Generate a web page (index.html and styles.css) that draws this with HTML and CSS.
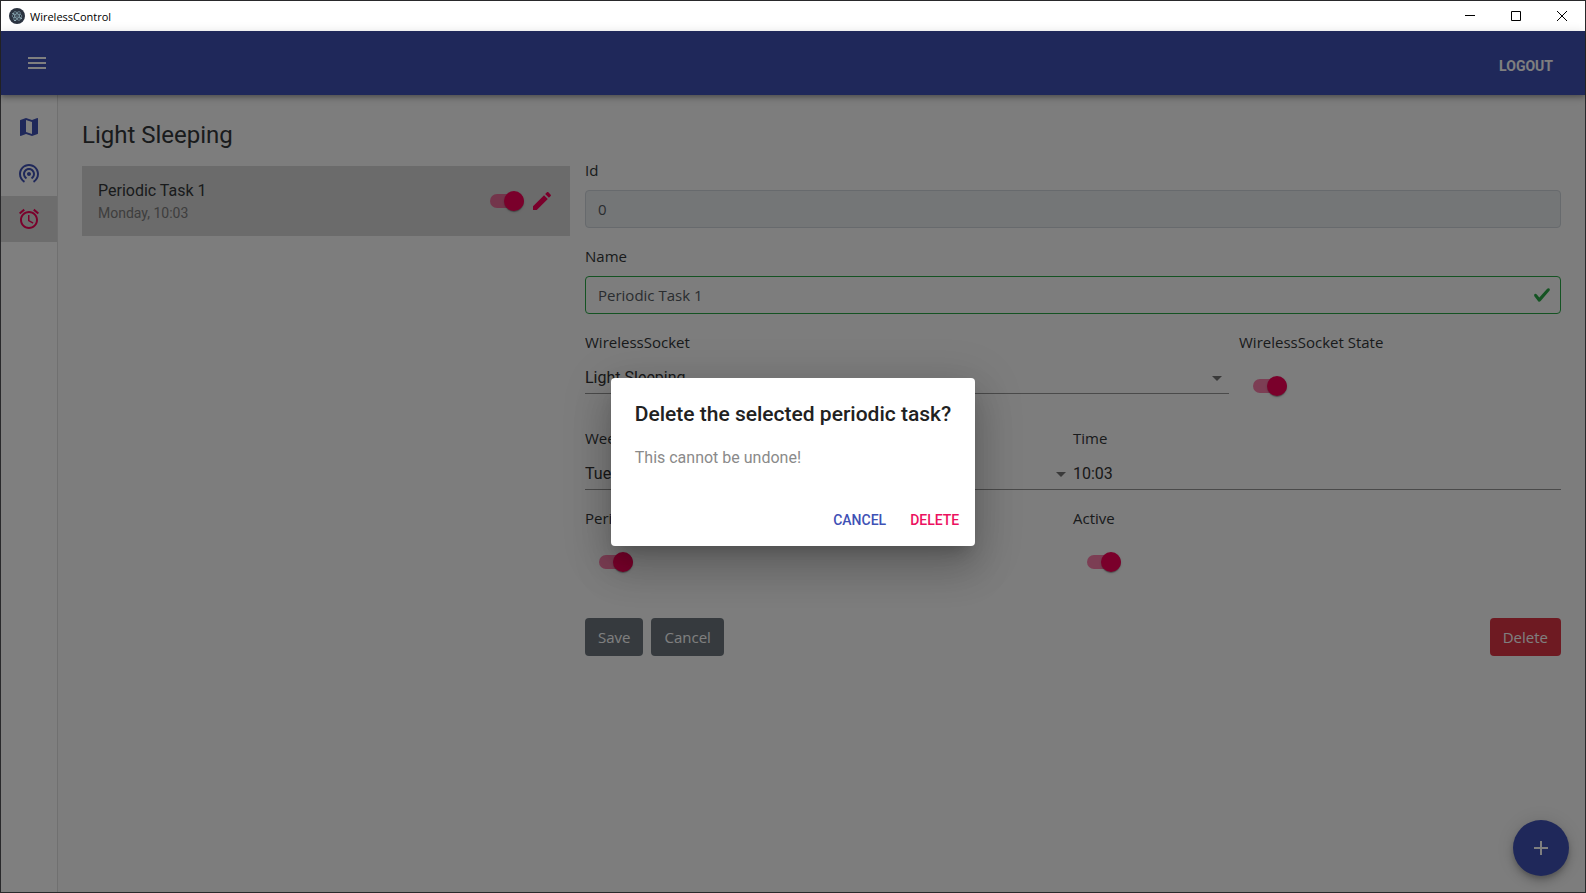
FILE: index.html
```html
<!DOCTYPE html>
<html lang="en">
<head>
<meta charset="utf-8">
<title>WirelessControl</title>
<link rel="stylesheet" href="styles.css">
</head>
<body>
<div class="window">
  <header class="titlebar">
    <svg class="titlebar-logo" viewBox="0 0 16 16" aria-hidden="true">
      <circle cx="8" cy="8" r="8" fill="#2b3340"/>
      <g fill="none" stroke="#9fc3cf" stroke-width=".5">
        <ellipse cx="8" cy="8" rx="5" ry="2"/>
        <ellipse cx="8" cy="8" rx="5" ry="2" transform="rotate(60 8 8)"/>
        <ellipse cx="8" cy="8" rx="5" ry="2" transform="rotate(120 8 8)"/>
      </g>
      <g fill="#b9dbe5"><circle cx="8" cy="8" r=".6"/><circle cx="4" cy="5.6" r=".7"/><circle cx="12.2" cy="10.2" r=".7"/><circle cx="6" cy="12.4" r=".7"/></g>
    </svg>
    <span class="titlebar-name">WirelessControl</span>
    <div class="titlebar-controls">
      <button type="button" aria-label="Minimize"><svg viewBox="0 0 10 10"><path d="M0 4.5h10"/></svg></button>
      <button type="button" aria-label="Maximize"><svg viewBox="0 0 10 10"><path d="M.5.5h9v9h-9z"/></svg></button>
      <button type="button" aria-label="Close"><svg viewBox="0 0 10 10"><path d="M0 0l10 10M10 0L0 10"/></svg></button>
    </div>
  </header>

  <div class="app">
    <div class="appbar">
      <button class="icon-button" type="button" aria-label="Menu">
        <svg class="icon" viewBox="0 0 24 24"><path d="M3 18h18v-2H3v2zm0-5h18v-2H3v2zm0-7v2h18V6H3z"/></svg>
      </button>
      <button class="logout" type="button">LOGOUT</button>
    </div>

    <div class="body">
      <nav class="sidebar">
        <a class="nav-item" href="#map" aria-label="Map"><svg class="icon" viewBox="0 0 24 24"><path d="M20.5 3l-.16.03L15 5.1 9 3 3.36 4.9c-.21.07-.36.25-.36.48V20.500c0 .28.22.5.5.5l.16-.03L9 18.900l6 2.100 5.640-1.900c.21-.07.36-.25.36-.48V3.500c0-.28-.22-.5-.5-.5zM15 19l-6-2.110V5l6 2.110V19z"/></svg></a>
        <a class="nav-item" href="#sockets" aria-label="Sockets"><svg class="icon" viewBox="0 0 24 24"><path d="M12 11c-1.100 0-2 .9-2 2s.9 2 2 2 2-.9 2-2-.9-2-2-2zm6 2c0-3.310-2.690-6-6-6s-6 2.690-6 6c0 2.220 1.210 4.150 3 5.190l1-1.740c-1.190-.7-2-1.970-2-3.450 0-2.210 1.790-4 4-4s4 1.790 4 4c0 1.480-.81 2.750-2 3.450l1 1.740c1.790-1.040 3-2.970 3-5.190zM12 3C6.480 3 2 7.480 2 13c0 3.700 2.010 6.920 4.990 8.650l1-1.730C5.610 18.530 4 15.960 4 13c0-4.420 3.580-8 8-8s8 3.580 8 8c0 2.960-1.610 5.530-4 6.920l1 1.730c2.990-1.730 5-4.950 5-8.650 0-5.520-4.480-10-10-10z"/></svg></a>
        <a class="nav-item nav-item-active" href="#tasks" aria-label="Periodic tasks" aria-current="page"><svg class="icon" viewBox="0 0 24 24"><path d="M22 5.720l-4.600-3.860-1.290 1.530 4.600 3.860L22 5.720zM7.880 3.390L6.600 1.860 2 5.710l1.290 1.530 4.590-3.850zM12.500 8H11v6l4.750 2.850.75-1.230-4-2.370V8zM12 4c-4.970 0-9 4.030-9 9s4.020 9 9 9c4.970 0 9-4.030 9-9s-4.030-9-9-9zm0 16c-3.870 0-7-3.130-7-7s3.130-7 7-7 7 3.130 7 7-3.130 7-7 7z"/></svg></a>
      </nav>

      <main class="content">
        <h1 class="page-title">Light Sleeping</h1>
        <div class="columns">
          <section class="task">
            <div class="task-text">
              <div class="task-name">Periodic Task 1</div>
              <div class="task-when">Monday, 10:03</div>
            </div>
            <input class="switch" type="checkbox" checked aria-label="Periodic Task 1 active">
            <button class="edit" type="button" aria-label="Edit">
              <svg class="icon" viewBox="0 0 24 24"><path d="M3 17.250V21h3.750L17.810 9.940l-3.750-3.750L3 17.250zM20.710 7.040c.39-.39.39-1.020 0-1.410l-2.340-2.340c-.39-.39-1.020-.39-1.410 0l-1.830 1.830 3.750 3.750 1.830-1.830z"/></svg>
            </button>
          </section>

          <form class="form">
            <div class="field">
              <label for="id">Id</label>
              <input class="text-input" id="id" type="text" value="0" disabled>
            </div>
            <div class="field">
              <label for="name">Name</label>
              <div class="valid-wrap">
                <input class="text-input text-input-valid" id="name" type="text" value="Periodic Task 1">
                <svg class="valid-mark" viewBox="0 0 8 8" aria-hidden="true"><path d="M2.300 6.730L.6 4.530c-.4-1.040.46-1.400 1.100-.8l1.100 1.400 3.400-3.800c.6-.63 1.600-.27 1.200.7l-4 4.600c-.43.5-.8.4-1.100.1z"/></svg>
              </div>
            </div>
            <div class="row row-socket">
              <div class="field">
                <label for="socket">WirelessSocket</label>
                <div class="select-wrap"><select class="line-input" id="socket"><option>Light Sleeping</option></select></div>
              </div>
              <div class="field">
                <label for="state">WirelessSocket State</label>
                <div class="switch-wrap"><input class="switch" id="state" type="checkbox" checked></div>
              </div>
            </div>
            <div class="row">
              <div class="field">
                <label for="weekday">Weekday</label>
                <div class="select-wrap"><select class="line-input" id="weekday"><option>Tuesday</option></select></div>
              </div>
              <div class="field">
                <label for="time">Time</label>
                <input class="line-input" id="time" type="text" value="10:03">
              </div>
            </div>
            <div class="row">
              <div class="field">
                <label for="periodic">Periodic</label>
                <div class="switch-wrap"><input class="switch" id="periodic" type="checkbox" checked></div>
              </div>
              <div class="field">
                <label for="active">Active</label>
                <div class="switch-wrap"><input class="switch" id="active" type="checkbox" checked></div>
              </div>
            </div>
            <div class="actions">
              <button class="button" type="button">Save</button>
              <button class="button" type="button">Cancel</button>
              <button class="button button-danger" type="button">Delete</button>
            </div>
          </form>
        </div>
      </main>
    </div>

    <button class="fab" type="button" aria-label="Add"><svg class="icon" viewBox="0 0 24 24"><path d="M19 13h-6v6h-2v-6H5v-2h6V5h2v6h6v2z"/></svg></button>

    <div class="backdrop">
      <div class="dialog" role="dialog" aria-modal="true" aria-labelledby="dialog-title">
        <h2 class="dialog-title" id="dialog-title">Delete the selected periodic task?</h2>
        <p class="dialog-text">This cannot be undone!</p>
        <div class="dialog-actions">
          <button class="dialog-button" type="button">CANCEL</button>
          <button class="dialog-button dialog-button-delete" type="button">DELETE</button>
        </div>
      </div>
    </div>
  </div>
</div>
</body>
</html>
```
FILE: styles.css
```css
* { box-sizing: border-box; }

:root {
  --primary: #3f51b5;
  --secondary: #f50057;
  --ui: Roboto, "Liberation Sans", sans-serif;
  --form: "Open Sans", "Noto Sans", sans-serif;
}

body { margin: 0; font-family: var(--ui); color: #333639; }
button { border: 0; padding: 0; background: none; font: inherit; color: inherit; cursor: pointer; }
.icon { display: block; width: 24px; height: 24px; fill: currentColor; }

.window {
  display: flex;
  flex-direction: column;
  min-height: 100vh;
  border: 1px solid #29292b;
}

/* Title bar */
.titlebar { display: flex; align-items: center; height: 30px; padding-left: 8px; background: #fff; }
.titlebar-logo { width: 16px; height: 16px; }
.titlebar-name { margin-left: 5px; font: 11px "Open Sans", sans-serif; color: #000; }
.titlebar-controls { display: flex; margin-left: auto; }
.titlebar-controls button { display: grid; place-items: center; width: 46px; height: 28px; }
.titlebar-controls svg { width: 10px; height: 10px; fill: none; stroke: #000; }

/* Application */
.app { position: relative; display: flex; flex: 1; flex-direction: column; background: #fafafa; }
.appbar {
  z-index: 1;
  display: flex;
  align-items: center;
  justify-content: space-between;
  height: 64px;
  padding: 0 32px 0 24px;
  background: var(--primary);
  color: #fff;
  box-shadow: 0 2px 4px -1px rgba(0,0,0,.2), 0 4px 5px rgba(0,0,0,.14), 0 1px 10px rgba(0,0,0,.12);
}
.logout { padding-top: 6px; font-size: 14px; font-weight: 700; }
.body { display: flex; flex: 1; }
.sidebar { flex: none; width: 57px; padding-top: 9px; background: #fff; border-right: 1px solid #e0e0e0; }
.nav-item { display: grid; place-items: center; height: 46px; color: var(--primary); }
.nav-item-active { background: #dbdbdb; color: var(--secondary); }

.content { flex: 1; padding: 24px; }
.page-title { margin: 0; font-size: 24px; line-height: 32px; font-weight: 400; }
.columns { display: grid; grid-template-columns: 1fr 2fr; gap: 15px; align-items: start; }

.task { display: flex; align-items: center; gap: 6px; margin-top: 15px; height: 70px; padding: 0 16px; background: #d6d6d6; }
.task-text { flex: 1; }
.task-name { font-size: 16px; line-height: 24px; }
.task-when { font-size: 14px; line-height: 20px; color: #7c7c7c; }
.edit { color: var(--secondary); }

/* Form */
.form { display: flex; flex-direction: column; gap: 16px; margin-top: 7px; font: 15px/24px var(--form); }
.field { display: flex; flex-direction: column; gap: 8px; min-width: 0; }
.row { display: grid; grid-template-columns: 1fr 1fr; }
.row-socket { grid-template-columns: 2fr 1fr; column-gap: 10px; }
.text-input {
  width: 100%;
  height: 38px;
  padding: 0 12px;
  border: 1px solid #ced4da;
  border-radius: 4px;
  background: transparent;
  font: 15px var(--form);
  color: #555b61;
}
.text-input:disabled { background: #e9ecef; }
.text-input-valid { border-color: #28a745; }
.valid-wrap { position: relative; }
.valid-mark { position: absolute; top: 10px; right: 10px; width: 18px; height: 18px; fill: #28a745; }
.line-input {
  display: block;
  width: 100%;
  height: 32px;
  padding: 0;
  border: 0;
  border-bottom: 1px solid #949494;
  border-radius: 0;
  background: transparent;
  appearance: none;
  font: 16px var(--ui);
  color: #333;
}
.select-wrap { position: relative; }
.select-wrap::after {
  content: "";
  position: absolute;
  top: 14px;
  right: 7px;
  border: 5px solid transparent;
  border-top-color: #757575;
  border-bottom: 0;
}

.switch {
  position: relative;
  display: flex;
  align-items: center;
  justify-content: flex-end;
  width: 34px;
  height: 20px;
  margin: 0;
  appearance: none;
}
.switch::before {
  content: "";
  position: absolute;
  inset: 3px 0;
  border-radius: 7px;
  background: var(--secondary);
  opacity: .5;
}
.switch::after {
  content: "";
  z-index: 1;
  width: 20px;
  height: 20px;
  border-radius: 50%;
  background: var(--secondary);
  box-shadow: 0 2px 1px -1px rgba(0,0,0,.2), 0 1px 1px rgba(0,0,0,.14), 0 1px 3px rgba(0,0,0,.12);
}
.switch-wrap { display: flex; align-items: center; height: 48px; padding-left: 14px; }

.actions { display: flex; gap: 8px; margin-top: 16px; }
.button { height: 38px; padding: 0 13px; border-radius: 4px; background: #6c757d; color: #fff; }
.button-danger { margin-left: auto; background: #dc3545; }

.fab {
  position: absolute;
  right: 16px;
  bottom: 16px;
  display: grid;
  place-items: center;
  width: 56px;
  height: 56px;
  border-radius: 50%;
  background: var(--primary);
  color: #fff;
  box-shadow: 0 3px 5px -1px rgba(0,0,0,.2), 0 6px 10px rgba(0,0,0,.14), 0 1px 18px rgba(0,0,0,.12);
}

/* Dialog */
.backdrop { position: absolute; inset: 0; z-index: 2; display: grid; place-items: center; background: rgba(0,0,0,.5); }
.dialog {
  padding-top: 16px;
  border-radius: 4px;
  background: #fff;
  box-shadow: 0 11px 15px -7px rgba(0,0,0,.2), 0 24px 38px 3px rgba(0,0,0,.14), 0 9px 46px 8px rgba(0,0,0,.12);
}
.dialog-title { margin: 0; padding: 4px 24px 12px; font-size: 21px; line-height: 32px; font-weight: 500; color: #212121; }
.dialog-text { margin: 0; padding: 4px 24px 24px; font-size: 16px; line-height: 24px; color: #8a8a8a; }
.dialog-actions { display: flex; justify-content: flex-end; gap: 8px; padding: 8px; }
.dialog-button { height: 36px; padding: 0 8px; font-size: 14px; font-weight: 500; color: var(--primary); }
.dialog-button-delete { color: #ec1160; }
```
